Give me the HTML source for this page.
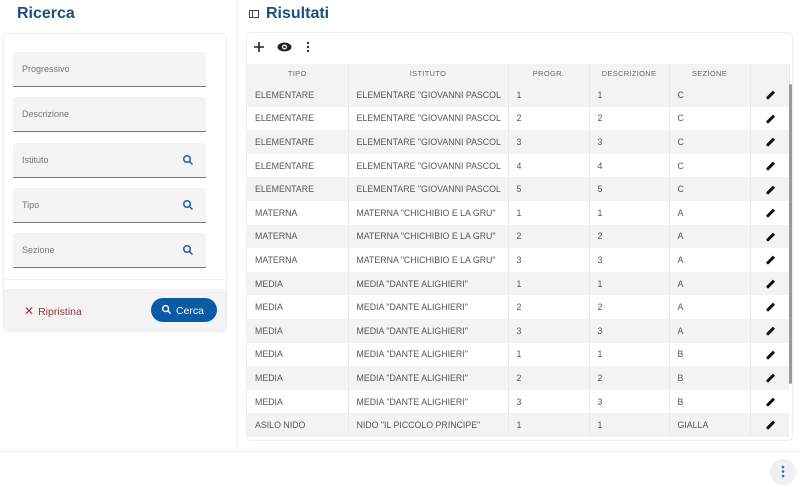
<!DOCTYPE html>
<html><head><style>
*{box-sizing:border-box;margin:0;padding:0}
body{width:800px;height:487px;background:#fff;font-family:"Liberation Sans",sans-serif;position:relative;overflow:hidden;color:#555}
.abs{position:absolute}
h1{position:absolute;font-size:16px;font-weight:bold;color:#1d4f7c}
.field{position:absolute;left:13px;width:193px;height:35px;background:#f4f4f4;border-bottom:1.5px solid #777;border-radius:4px 4px 0 0;font-size:9px;color:#777;padding:12px 9px}
.field svg{position:absolute;right:12px;top:11px}
table{border-collapse:collapse;table-layout:fixed;font-size:8.8px;color:#555;position:absolute;left:247px;top:64px;width:542px}
td,th{height:23.6px;padding:0 8px;border-right:1px solid #eaeaea;text-align:left;font-weight:normal;white-space:nowrap;overflow:hidden}
th{height:19px;text-align:center;font-size:7.5px;color:#666;letter-spacing:.3px;background:#f3f3f3}
tr:nth-child(even) td{background:#f3f3f3}
td:last-child{border-right:none;text-align:center}
.p{display:inline-block;width:2.5px;height:10px;background:#111;transform:rotate(45deg);vertical-align:middle;border-radius:0 0 1px 1px}
</style></head><body>
<h1 style="left:17px;top:5px">Ricerca</h1>
<div class="abs" style="left:236px;top:0;width:1px;height:450px;background:#f0f0f0"></div>
<div class="abs" style="left:3px;top:33px;width:224px;height:298px;border:1px solid #eee;border-radius:5px;box-shadow:0 1px 2px rgba(0,0,0,.06)"></div>
<div class="field" style="top:52px">Progressivo</div>
<div class="field" style="top:97px">Descrizione</div>
<div class="field" style="top:143px">Istituto<svg width="12" height="12" viewBox="0 0 24 24"><circle cx="10" cy="10" r="6.5" fill="none" stroke="#1d5fa6" stroke-width="3"/><path d="M15 15l6 6" stroke="#1d5fa6" stroke-width="3"/></svg></div>
<div class="field" style="top:188px">Tipo<svg width="12" height="12" viewBox="0 0 24 24"><circle cx="10" cy="10" r="6.5" fill="none" stroke="#1d5fa6" stroke-width="3"/><path d="M15 15l6 6" stroke="#1d5fa6" stroke-width="3"/></svg></div>
<div class="field" style="top:233px">Sezione<svg width="12" height="12" viewBox="0 0 24 24"><circle cx="10" cy="10" r="6.5" fill="none" stroke="#1d5fa6" stroke-width="3"/><path d="M15 15l6 6" stroke="#1d5fa6" stroke-width="3"/></svg></div>
<div class="abs" style="left:4px;top:279px;width:222px;height:1px;background:#f0f0f0"></div>
<div class="abs" style="left:4px;top:289px;width:222px;height:41px;background:#f3f3f3;border-radius:0 0 5px 5px"></div>
<div class="abs" style="left:24px;top:304px;font-size:10.5px;color:#8b3a3a"><span style="color:#b33;font-size:12px;margin-right:4px">✕</span>Ripristina</div>
<div class="abs" style="left:151px;top:298px;width:66px;height:24px;background:#0b5aa5;border-radius:12px;color:#fff;font-size:10.5px;padding:6px 0 0 10px"><svg width="11" height="11" viewBox="0 0 24 24" style="vertical-align:-1px;margin-right:4px"><circle cx="10" cy="10" r="6.5" fill="none" stroke="#fff" stroke-width="3"/><path d="M15 15l6 6" stroke="#fff" stroke-width="3"/></svg>Cerca</div>

<svg class="abs" style="left:249px;top:9px" width="10" height="10" viewBox="0 0 10 10"><rect x="0.5" y="1.5" width="9" height="7" fill="none" stroke="#445" stroke-width="1"/><path d="M3.5 1.5v7" stroke="#445"/></svg>
<h1 style="left:266px;top:5px">Risultati</h1>
<div class="abs" style="left:246px;top:32px;width:547px;height:409px;border:1px solid #eee;border-radius:5px"></div>
<svg class="abs" style="left:254px;top:42px" width="10" height="10"><path d="M5 0v10M0 5h10" stroke="#222" stroke-width="1.6"/></svg>
<svg class="abs" style="left:277px;top:42px" width="15" height="10" viewBox="0 0 15 10"><ellipse cx="7.5" cy="5" rx="7" ry="4.5" fill="#222"/><circle cx="7.5" cy="5" r="2.5" fill="#fff"/><circle cx="7.5" cy="5" r="1.3" fill="#222"/></svg>
<svg class="abs" style="left:306px;top:41px" width="4" height="12"><circle cx="2" cy="2" r="1.2" fill="#333"/><circle cx="2" cy="6" r="1.2" fill="#333"/><circle cx="2" cy="10" r="1.2" fill="#333"/></svg>
<table>
<colgroup><col style="width:101px"><col style="width:160px"><col style="width:81px"><col style="width:80px"><col style="width:81px"><col style="width:39px"></colgroup>
<tr><th>TIPO</th><th>ISTITUTO</th><th>PROGR.</th><th>DESCRIZIONE</th><th>SEZIONE</th><th></th></tr>
<tr><td>ELEMENTARE</td><td>ELEMENTARE "GIOVANNI PASCOL</td><td>1</td><td>1</td><td>C</td><td><i class="p"></i></td></tr>
<tr><td>ELEMENTARE</td><td>ELEMENTARE "GIOVANNI PASCOL</td><td>2</td><td>2</td><td>C</td><td><i class="p"></i></td></tr>
<tr><td>ELEMENTARE</td><td>ELEMENTARE "GIOVANNI PASCOL</td><td>3</td><td>3</td><td>C</td><td><i class="p"></i></td></tr>
<tr><td>ELEMENTARE</td><td>ELEMENTARE "GIOVANNI PASCOL</td><td>4</td><td>4</td><td>C</td><td><i class="p"></i></td></tr>
<tr><td>ELEMENTARE</td><td>ELEMENTARE "GIOVANNI PASCOL</td><td>5</td><td>5</td><td>C</td><td><i class="p"></i></td></tr>
<tr><td>MATERNA</td><td>MATERNA "CHICHIBIO E LA GRU"</td><td>1</td><td>1</td><td>A</td><td><i class="p"></i></td></tr>
<tr><td>MATERNA</td><td>MATERNA "CHICHIBIO E LA GRU"</td><td>2</td><td>2</td><td>A</td><td><i class="p"></i></td></tr>
<tr><td>MATERNA</td><td>MATERNA "CHICHIBIO E LA GRU"</td><td>3</td><td>3</td><td>A</td><td><i class="p"></i></td></tr>
<tr><td>MEDIA</td><td>MEDIA "DANTE ALIGHIERI"</td><td>1</td><td>1</td><td>A</td><td><i class="p"></i></td></tr>
<tr><td>MEDIA</td><td>MEDIA "DANTE ALIGHIERI"</td><td>2</td><td>2</td><td>A</td><td><i class="p"></i></td></tr>
<tr><td>MEDIA</td><td>MEDIA "DANTE ALIGHIERI"</td><td>3</td><td>3</td><td>A</td><td><i class="p"></i></td></tr>
<tr><td>MEDIA</td><td>MEDIA "DANTE ALIGHIERI"</td><td>1</td><td>1</td><td>B</td><td><i class="p"></i></td></tr>
<tr><td>MEDIA</td><td>MEDIA "DANTE ALIGHIERI"</td><td>2</td><td>2</td><td>B</td><td><i class="p"></i></td></tr>
<tr><td>MEDIA</td><td>MEDIA "DANTE ALIGHIERI"</td><td>3</td><td>3</td><td>B</td><td><i class="p"></i></td></tr>
<tr><td>ASILO NIDO</td><td>NIDO "IL PICCOLO PRINCIPE"</td><td>1</td><td>1</td><td>GIALLA</td><td><i class="p"></i></td></tr>
</table>
<div class="abs" style="left:789px;top:84px;width:3px;height:300px;background:#999;border-radius:2px"></div>
<div class="abs" style="left:0;top:451px;width:800px;height:1px;background:#eee"></div>
<div class="abs" style="left:770px;top:459px;width:26px;height:26px;border-radius:50%;background:#eef0f2"></div>
<svg class="abs" style="left:781px;top:465px" width="4" height="13"><circle cx="2" cy="2" r="1.3" fill="#1d6fc0"/><circle cx="2" cy="6.5" r="1.3" fill="#1d6fc0"/><circle cx="2" cy="11" r="1.3" fill="#1d6fc0"/></svg>
</body></html>
